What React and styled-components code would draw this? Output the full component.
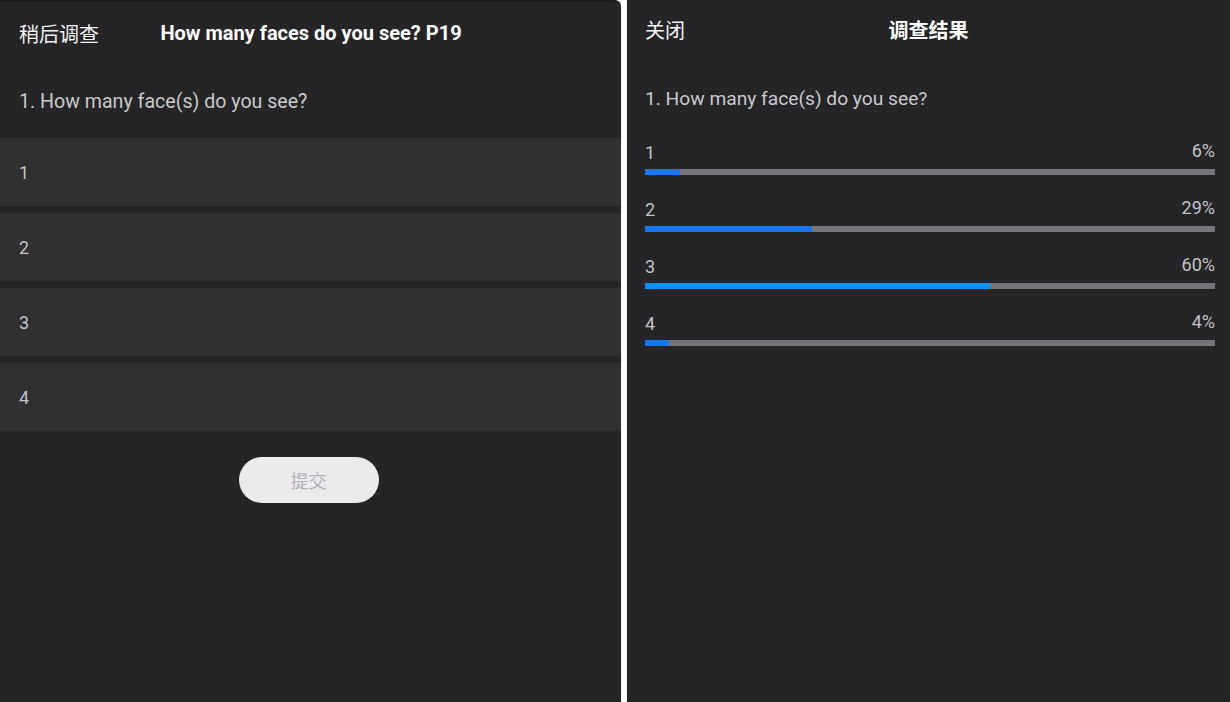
import React from "react";
import styled, { createGlobalStyle } from "styled-components";

const GlobalStyle = createGlobalStyle`
  html, body { margin: 0; padding: 0; background: #ffffff; }
  body { font-family: "Roboto", "Noto Sans CJK SC", sans-serif; }
  * { box-sizing: border-box; }
`;

const Screen = styled.div`
  display: flex;
  width: 1230px;
  height: 702px;
  gap: 6px;
  background: #ffffff;
  overflow: hidden;
`;

const Panel = styled.section`
  display: flex;
  flex-direction: column;
  width: ${(p) => p.$width}px;
  flex-shrink: 0;
  height: 100%;
  background: #252427;
  border-top: ${(p) => (p.$topLine ? "2px solid #1b1b1d" : "none")};
  border-top-right-radius: ${(p) => (p.$topLine ? "6px" : "0")};
`;

const Header = styled.header`
  display: grid;
  grid-template-columns: 1fr auto 1fr;
  align-items: center;
  height: ${(p) => p.$height}px;
  padding: 0 18px 0 ${(p) => p.$padLeft}px;
`;

const HeaderAction = styled.span`
  font-size: 20px;
  color: #f2f2f5;
  justify-self: start;
`;

const HeaderTitle = styled.h1`
  margin: 0;
  font-size: 20px;
  font-weight: 700;
  color: #ffffff;
  white-space: nowrap;
`;

const Question = styled.div`
  display: flex;
  align-items: center;
  height: ${(p) => p.$height}px;
  padding-left: ${(p) => p.$padLeft}px;
  font-size: ${(p) => p.$size}px;
  color: #c9c8cd;
`;

const Options = styled.div`
  display: flex;
  flex-direction: column;
  gap: 7px;
`;

const OptionRow = styled.div`
  display: flex;
  align-items: center;
  height: 68px;
  padding-left: 19px;
  background: #302f32;
  font-size: 18px;
  color: #c3c2c7;
`;

const SubmitButton = styled.button`
  align-self: center;
  margin-top: 26px;
  margin-right: 4px;
  width: 140px;
  height: 46px;
  border: none;
  border-radius: 23px;
  background: #ebeaed;
  color: #b3b2b6;
  font-family: "Roboto", "Noto Sans CJK SC", sans-serif;
  font-size: 18px;
`;

const Results = styled.div`
  display: flex;
  flex-direction: column;
  gap: 23px;
  padding: 4px 15px 0 18px;
`;

const ResultItem = styled.div`
  display: flex;
  flex-direction: column;
  gap: 6px;
`;

const ResultLabels = styled.div`
  display: flex;
  justify-content: space-between;
  align-items: center;
  height: 22px;
  font-size: 18px;
  color: #c3c2c7;
`;

const Percent = styled.span`
  margin-top: -4px;
`;

const Track = styled.div`
  height: 6px;
  background: #757478;
`;

const Fill = styled.div`
  height: 100%;
  background: ${(p) => (p.$highlight ? "#0a90ff" : "#1776ee")};
`;

const options = ["1", "2", "3", "4"];
const results = [
  { label: "1", pct: 6, width: 6.2 },
  { label: "2", pct: 29, width: 29.3 },
  { label: "3", pct: 60, width: 60.5, highlight: true },
  { label: "4", pct: 4, width: 4.2 },
];

export default function App() {
  return (
    <>
      <GlobalStyle />
      <Screen>
        <Panel $width={621} $topLine>
          <Header $height={62} $padLeft={19}>
            <HeaderAction>稍后调查</HeaderAction>
            <HeaderTitle>How many faces do you see? P19</HeaderTitle>
            <span />
          </Header>
          <Question $height={74} $padLeft={19} $size={19.6}>
            1. How many face(s) do you see?
          </Question>
          <Options>
            {options.map((o) => (
              <OptionRow key={o}>{o}</OptionRow>
            ))}
          </Options>
          <SubmitButton type="button">提交</SubmitButton>
        </Panel>
        <Panel $width={603}>
          <Header $height={59} $padLeft={18}>
            <HeaderAction>关闭</HeaderAction>
            <HeaderTitle>调查结果</HeaderTitle>
            <span />
          </Header>
          <Question $height={78} $padLeft={18} $size={19.2}>
            1. How many face(s) do you see?
          </Question>
          <Results>
            {results.map((r) => (
              <ResultItem key={r.label}>
                <ResultLabels>
                  <span>{r.label}</span>
                  <Percent>{r.pct}%</Percent>
                </ResultLabels>
                <Track>
                  <Fill $highlight={r.highlight} style={{ width: `${r.width}%` }} />
                </Track>
              </ResultItem>
            ))}
          </Results>
        </Panel>
      </Screen>
    </>
  );
}
